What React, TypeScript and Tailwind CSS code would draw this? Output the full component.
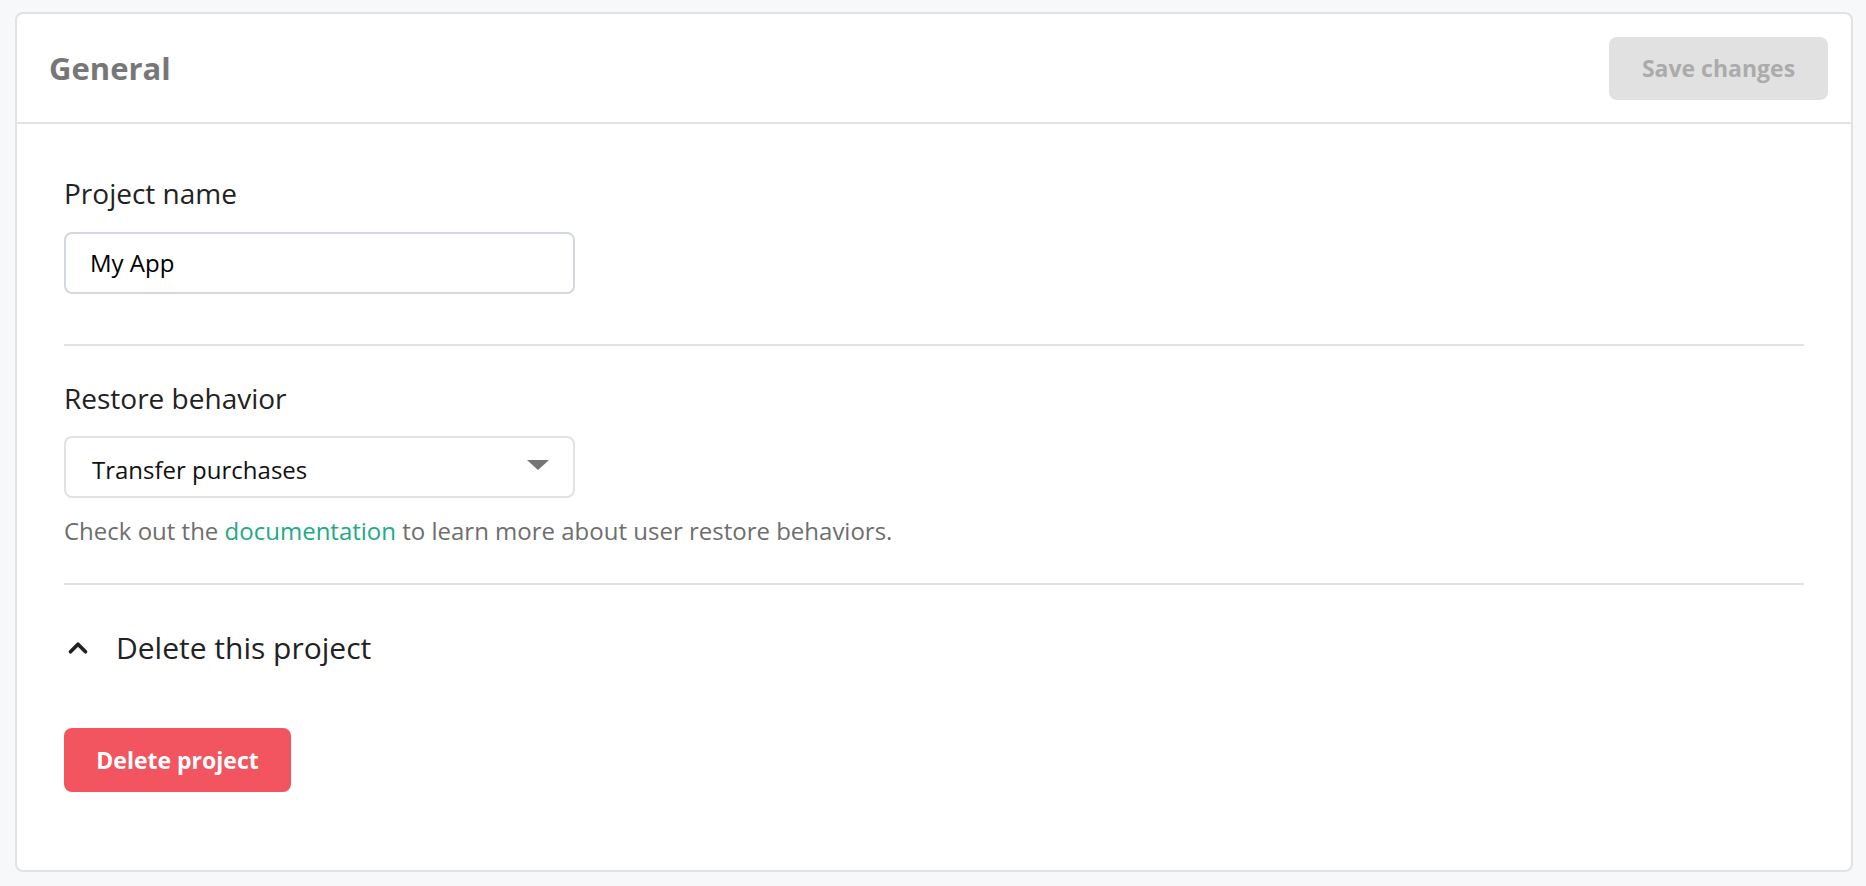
import { ChevronUp } from 'lucide-react';

const font = { fontFamily: '"Open Sans", "Noto Sans", sans-serif' };

function Divider() {
  return <div className="h-[2px] w-full bg-[#e2e2e2]" />;
}

export default function App() {
  return (
    <div className="min-h-screen bg-[#f7f8fa] pt-[12px] pl-[15px] pr-[13px]" style={font}>
      <div className="flex h-[860px] flex-col rounded-[8px] border-2 border-[#e2e2e2] bg-white">
        <div className="flex h-[110px] shrink-0 items-center justify-between border-b-2 border-[#e2e2e2] pl-[32px] pr-[23px]">
          <h1 className="text-[31px] font-bold leading-[40px] text-[#777777]">General</h1>
          <button className="h-[63px] w-[219px] rounded-[8px] bg-[#e1e1e1] text-[23px] font-bold text-[#ababab]">
            Save changes
          </button>
        </div>

        <div className="flex flex-col px-[47px] pt-[51px]">
          <label className="text-[28px] leading-[36px] text-[#222222]">Project name</label>
          <div className="mt-[21px] flex h-[62px] w-[511px] items-center rounded-[8px] border-2 border-[#d3d8de] px-[24px]">
            <span className="text-[24px] leading-[30px] text-black">My App</span>
          </div>

          <div className="mt-[50px]">
            <Divider />
          </div>

          <label className="mt-[34px] text-[28px] leading-[36px] text-[#222222]">Restore behavior</label>
          <div className="mt-[20px] flex h-[62px] w-[511px] items-center justify-between rounded-[8px] border-2 border-[#e2e2e2] pl-[26px] pr-[24px] pt-[6px]">
            <span className="text-[24px] leading-[30px] text-[#111111]">Transfer purchases</span>
            <svg width="22" height="10" viewBox="0 0 22 10" className="-mt-[10px]">
              <polygon points="0,0 22,0 11,10" fill="#747474" />
            </svg>
          </div>
          <p className="mt-[18px] text-[24px] leading-[30px] text-[#6e6e6e]">
            Check out the <a className="text-[#22aa86]">documentation</a> to learn more about user restore behaviors.
          </p>

          <div className="mt-[37px]">
            <Divider />
          </div>

          <div className="mt-[43px] flex items-center gap-[23px]">
            <ChevronUp size={30} strokeWidth={3} className="ml-[-1px] text-[#222222]" />
            <span className="text-[30px] leading-[40px] text-[#222222]">Delete this project</span>
          </div>

          <button className="mt-[60px] h-[64px] w-[227px] rounded-[8px] bg-[#f2555f] text-[23px] font-bold text-white">
            Delete project
          </button>
        </div>
      </div>
    </div>
  );
}
